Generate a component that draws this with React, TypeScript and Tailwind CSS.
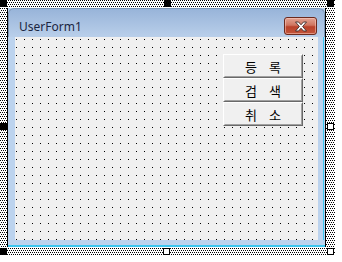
import React from "react";

const hatch =
  "[background-image:conic-gradient(at_1px_1px,transparent_75%,#000_0),conic-gradient(at_1px_1px,transparent_75%,#000_0)] [background-size:2px_4px] [background-position:0_0,1px_2px] bg-white";

function Handle({ x, y, filled }: { x: number; y: number; filled: boolean }) {
  return (
    <div
      className={`absolute w-[7px] h-[7px] border border-black ${filled ? "bg-black" : "bg-white"}`}
      style={{ left: x, top: y }}
    />
  );
}

function Btn({ label }: { label: string }) {
  return (
    <div className="w-[80px] h-[24px] border border-t-white border-l-white border-r-[#696969] border-b-[#696969] bg-[#f0f0f0]">
      <div className="w-full h-full border border-t-[#f0f0f0] border-l-[#f0f0f0] border-r-[#a0a0a0] border-b-[#a0a0a0] flex items-center justify-center text-[13px] leading-none text-black [word-spacing:9px] [font-family:'Noto_Sans_CJK_KR',sans-serif]">
        {label}
      </div>
    </div>
  );
}

export default function App() {
  return (
    <div className="relative w-[342px] h-[262px] bg-white">
      <div className={`w-[335px] h-[256px] pl-[7px] pt-[8px] ${hatch}`}>
        <div className="w-[319px] h-[239px] border-l border-r border-black flex flex-col bg-[#bcd3ee]">
          {/* title bar */}
          <div className="h-[29px] rounded-t-[6px] border-t border-l border-r border-[#7e97b6] bg-[linear-gradient(#98b4d9,#b9cfea)] flex items-start justify-between pl-[10px] pr-[7px]">
            <span className="mt-[11px] text-[12px] leading-[14px] text-[#1b2541] [font-family:'Noto_Sans',sans-serif]">
              UserForm1
            </span>
            <div className="mt-[8px] w-[33px] h-[18px] rounded-[3px] border border-[#6b2a1e] bg-[linear-gradient(#e2a393_0%,#cf7560_45%,#b9412a_55%,#c2553a_100%)] flex items-center justify-center shadow-[inset_0_0_0_1px_rgba(255,210,200,0.5)]">
              <svg width="14" height="11" viewBox="0 0 14 11">
                <path
                  d="M1.5 1 L4.5 1 L7 3.8 L9.5 1 L12.5 1 L8.6 5.5 L12.5 10 L9.5 10 L7 7.2 L4.5 10 L1.5 10 L5.4 5.5 Z"
                  fill="#fff"
                  stroke="#3b2a2a"
                  strokeWidth="0.9"
                  strokeLinejoin="round"
                />
              </svg>
            </div>
          </div>
          {/* body */}
          <div className="flex flex-1">
            <div className="w-[7px] bg-[#bcd3ee]" />
            <div className="w-[303px] h-[203px] bg-[#f0f0f0] [background-image:linear-gradient(to_bottom,transparent_1px,#f0f0f0_1px),linear-gradient(to_right,#000_1px,transparent_1px)] [background-size:8px_8px] [background-position:1px_2px] pl-[208px] pt-[17px] flex flex-col">
              <Btn label="등 록" />
              <Btn label="검 색" />
              <Btn label="취 소" />
            </div>
            <div className="w-[6px] bg-[#bcd3ee] border-r border-[#3cc6ef]" />
          </div>
          <div className="h-[7px] bg-[#bcd3ee] border-b-2 border-[#3cc6ef]" />
        </div>
      </div>
      <Handle x={0} y={0} filled />
      <Handle x={164} y={0} filled />
      <Handle x={327} y={0} filled />
      <Handle x={0} y={123} filled />
      <Handle x={327} y={123} filled={false} />
      <Handle x={0} y={248} filled />
      <Handle x={163} y={248} filled={false} />
      <Handle x={327} y={248} filled={false} />
    </div>
  );
}
